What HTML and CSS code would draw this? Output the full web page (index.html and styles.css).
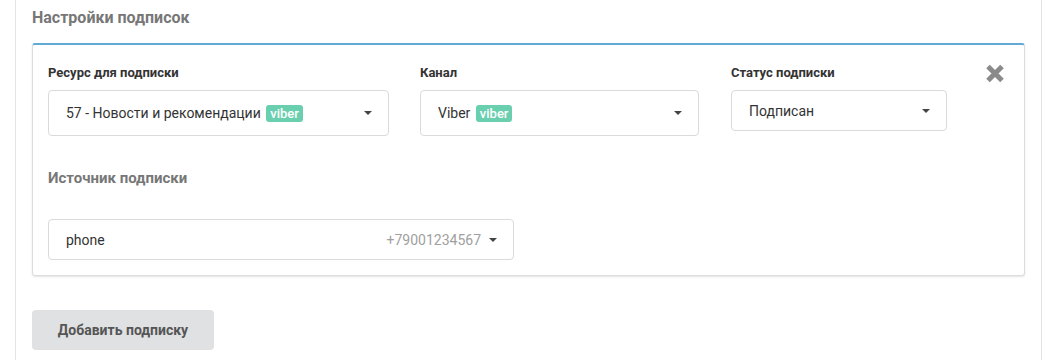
FILE: index.html
```html
<!DOCTYPE html>
<html lang="ru">
  <head>
    <meta charset="UTF-8" />
    <meta name="viewport" content="width=device-width, initial-scale=1.0" />
    <title>Настройки подписок</title>
    <link rel="stylesheet" href="styles.css">
  </head>
  <body>
    <section class="page-segment">
      <h3 class="segment-title">Настройки подписок</h3>

      <div class="subscription-card">
        <div class="fields-row">
          <div class="field field-resource">
            <label class="field-label">Ресурс для подписки</label>
            <div class="select select-tall">
              <span class="select-text">57 - Новости и рекомендации <span class="badge">viber</span></span>
              <span class="caret"></span>
            </div>
          </div>
          <div class="field field-channel">
            <label class="field-label">Канал</label>
            <div class="select select-tall">
              <span class="select-text">Viber <span class="badge">viber</span></span>
              <span class="caret"></span>
            </div>
          </div>
          <div class="field field-status">
            <label class="field-label">Статус подписки</label>
            <div class="select">
              <span class="select-text">Подписан</span>
              <span class="caret"></span>
            </div>
          </div>
          <span class="close-btn" title="Удалить">
            <svg width="20" height="19" viewBox="0 0 20 19">
              <path d="M3 2.5 L17 16.5 M17 2.5 L3 16.5" stroke="#8a8a8a" stroke-width="5" stroke-linecap="butt" />
            </svg>
          </span>
        </div>

        <h4 class="source-title">Источник подписки</h4>

        <div class="select select-source">
          <span class="select-text">phone</span>
          <span class="select-value">+79001234567</span>
          <span class="caret"></span>
        </div>
      </div>

      <button class="add-btn" type="button">Добавить подписку</button>
    </section>
  </body>
</html>
```

FILE: styles.css
```css
html,
body {
  padding: 0;
  margin: 0;
  background: #fff;
}

body {
  font-family: Roboto, "Liberation Sans", sans-serif;
  color: #333;
  height: 360px;
  overflow: hidden;
}

.page-segment {
  margin: 0 12px 0 15px;
  padding: 8px 16px 0;
  height: 360px;
  box-sizing: border-box;
  border-left: 1px solid #e3e3e3;
  border-right: 1px solid #e3e3e3;
}

.segment-title {
  margin: 0;
  font-size: 16px;
  line-height: 20px;
  font-weight: 700;
  color: #777;
}

.subscription-card {
  margin-top: 15px;
  padding: 19px 15px 15px;
  border: 1px solid #dcdcdc;
  border-top: 2px solid #62a9d6;
  border-radius: 3px;
  box-shadow: 0 1px 2px rgba(34, 36, 38, 0.12);
}

.fields-row {
  display: flex;
  align-items: flex-start;
}

.field {
  display: flex;
  flex-direction: column;
}

.field-resource {
  width: 341px;
  margin-right: 31px;
}

.field-channel {
  width: 279px;
  margin-right: 32px;
}

.field-status {
  width: 216px;
}

.field-label {
  font-size: 13px;
  line-height: 18px;
  font-weight: 700;
  color: #333;
  margin-bottom: 8px;
}

.select {
  display: flex;
  align-items: center;
  height: 41px;
  box-sizing: border-box;
  padding: 0 16px 0 17px;
  border: 1px solid #dadada;
  border-radius: 4px;
  font-size: 14px;
  color: #333;
}

.select-tall {
  height: 46px;
}

.select-text {
  flex: 1;
  white-space: nowrap;
}

.badge {
  display: inline-block;
  margin-left: 2px;
  padding: 0 4px;
  height: 17px;
  line-height: 17px;
  border-radius: 3px;
  background: #6acfae;
  color: #fff;
  font-size: 13px;
  font-weight: 500;
  vertical-align: 0;
}

.caret {
  width: 0;
  height: 0;
  border-left: 4px solid transparent;
  border-right: 4px solid transparent;
  border-top: 4px solid #444;
}

.close-btn {
  margin: 0 0 0 38px;
  line-height: 0;
  cursor: pointer;
}

.source-title {
  margin: 32px 0 0;
  font-size: 15px;
  line-height: 20px;
  font-weight: 700;
  color: #777;
}

.select-source {
  width: 466px;
  margin-top: 31px;
}

.select-value {
  color: #a0a0a0;
  margin-right: 8px;
}

.add-btn {
  margin-top: 34px;
  width: 182px;
  height: 40px;
  border: none;
  border-radius: 4px;
  background: #e0e1e2;
  color: #555;
  font-family: inherit;
  font-size: 14px;
  font-weight: 700;
  cursor: pointer;
}
```
